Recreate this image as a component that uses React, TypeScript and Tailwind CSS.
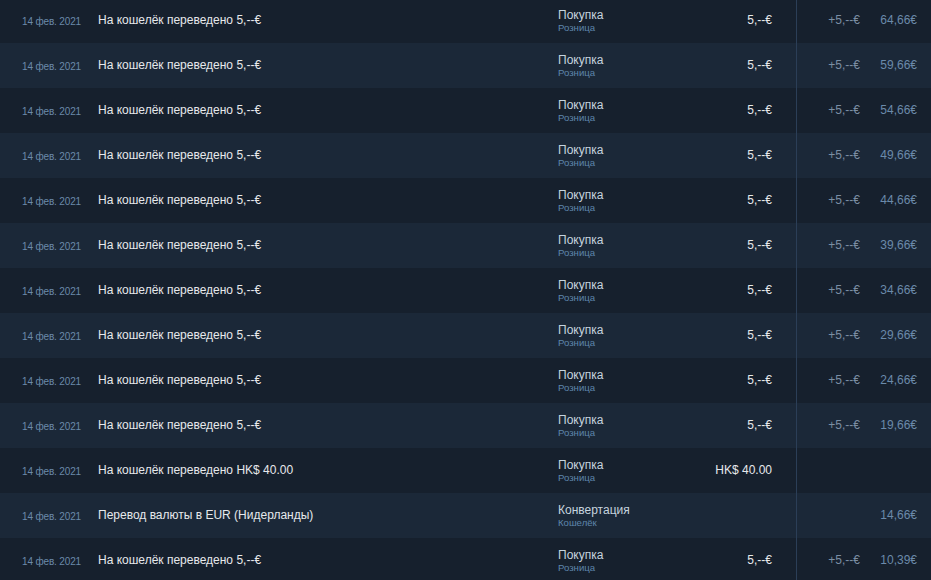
import React from "react";

type Row = {
  desc: string;
  type: string;
  sub: string;
  amount: string;
  change: string;
  balance: string;
};

const rows: Row[] = [
  ...["64,66€", "59,66€", "54,66€", "49,66€", "44,66€", "39,66€", "34,66€", "29,66€", "24,66€", "19,66€"].map((b) => ({
    desc: "На кошелёк переведено 5,--€",
    type: "Покупка",
    sub: "Розница",
    amount: "5,--€",
    change: "+5,--€",
    balance: b,
  })),
  {
    desc: "На кошелёк переведено HK$ 40.00",
    type: "Покупка",
    sub: "Розница",
    amount: "HK$ 40.00",
    change: "",
    balance: "",
  },
  {
    desc: "Перевод валюты в EUR (Нидерланды)",
    type: "Конвертация",
    sub: "Кошелёк",
    amount: "",
    change: "",
    balance: "14,66€",
  },
  {
    desc: "На кошелёк переведено 5,--€",
    type: "Покупка",
    sub: "Розница",
    amount: "5,--€",
    change: "+5,--€",
    balance: "10,39€",
  },
];

export default function App() {
  return (
    <div
      className="w-[931px] h-[580px] overflow-hidden bg-[#1b2838]"
      style={{ fontFamily: '"Liberation Sans", Arial, sans-serif' }}
    >
      <div className="-mt-[2px]">
        {rows.map((r, i) => (
          <div
            key={i}
            className={`flex h-[45px] items-center ${i % 2 === 0 ? "bg-[#16202d]" : "bg-[#1b2838]"}`}
          >
            <div className="w-[98px] shrink-0 pl-[22px] pt-[1px] text-[10px] tracking-[-0.15px] text-[#6b8aaa]">14 фев. 2021</div>
            <div className="w-[460px] shrink-0 pb-[1px] text-[12px] text-[#e6e9ec]">{r.desc}</div>
            <div className="w-[120px] shrink-0 flex flex-col leading-none">
              <span className="text-[12px] text-[#c6d4df]">{r.type}</span>
              <span className="mt-[2px] text-[9.6px] text-[#5e86ac]">{r.sub}</span>
            </div>
            <div className="flex h-full w-[119px] shrink-0 items-center justify-end border-r border-[#2b3e57] pr-[24px] pb-[1px] text-[12px] text-[#e6e9ec]">
              {r.amount}
            </div>
            <div className="w-[63px] shrink-0 pb-[1px] text-right text-[12px] text-[#7b8ea3]">{r.change}</div>
            <div className="w-[57px] shrink-0 pb-[1px] text-right text-[12px] text-[#6b8aaa]">{r.balance}</div>
          </div>
        ))}
      </div>
    </div>
  );
}
